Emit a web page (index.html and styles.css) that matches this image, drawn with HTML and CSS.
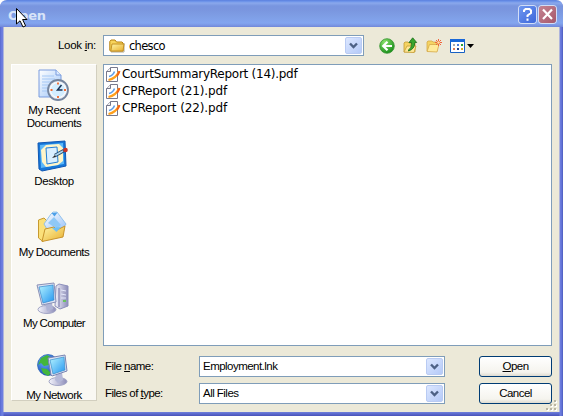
FILE: index.html
```html
<!DOCTYPE html>
<html lang="en">
<head>
<meta charset="utf-8">
<title>Open</title>
<link rel="stylesheet" href="styles.css">
</head>
<body>
<svg width="0" height="0" class="defs" aria-hidden="true">
  <defs>
    <linearGradient id="gold" x1="0" y1="0" x2="1" y2="1"><stop offset="0" stop-color="#fff6a8"/><stop offset="1" stop-color="#e8ae2c"/></linearGradient>
    <linearGradient id="screen" x1="0" y1="0" x2="1" y2="1"><stop offset="0" stop-color="#b5f4ff"/><stop offset="1" stop-color="#2495f0"/></linearGradient>
    <linearGradient id="metal" x1="0" y1="0" x2="1" y2="0"><stop offset="0" stop-color="#f4f4fc"/><stop offset="1" stop-color="#8c8cb8"/></linearGradient>
    <linearGradient id="sheet" x1="0" y1="0" x2="1" y2="1"><stop offset="0" stop-color="#fff"/><stop offset="1" stop-color="#9cc4f8"/></linearGradient>
    <radialGradient id="green" cx=".35" cy=".25" r=".8"><stop offset="0" stop-color="#8be36c"/><stop offset="1" stop-color="#168c18"/></radialGradient>
    <radialGradient id="ocean" cx=".35" cy=".3" r=".8"><stop offset="0" stop-color="#6ab8ff"/><stop offset="1" stop-color="#1238b0"/></radialGradient>
    <symbol id="chev" viewBox="0 0 9 8"><path d="M1 1.5 4.5 5 8 1.5" fill="none" stroke="#4d6185" stroke-width="2.4"/></symbol>
    <symbol id="pdf" viewBox="0 0 15 17">
      <path d="M4.500 1.500h7v14H.5v-10z" fill="#fff" stroke="#77798c"/><path d="M.5 5.500h4v-4" fill="#eee" stroke="#77798c"/>
      <path d="M3 10.500q4-1 5.500-5" fill="none" stroke="#5b9ce8" stroke-width="1.600"/>
      <path d="M2.500 14Q10 12.500 13 5.500" fill="none" stroke="#ffa01c" stroke-width="2.200"/><path d="M11 10q1.500-2 2.500-5" fill="none" stroke="#f46216" stroke-width="2"/>
    </symbol>
  </defs>
</svg>
<div class="window">
  <header class="titlebar">
    <span class="title">Open</span>
    <span class="cap help"><svg width="17" height="17" viewBox="0 0 17 17"><path d="M5 6V4.500L6.500 3h4L12 4.500V7L8.500 9.500V11M8.500 12.500v2.200" fill="none" stroke="#fff" stroke-width="2"/></svg></span>
    <span class="cap close"><svg width="17" height="17" viewBox="0 0 17 17"><path d="m4 3.500 9 9.500M13 3.500 4 13" fill="none" stroke="#fff" stroke-width="2.200"/></svg></span>
  </header>
  <svg class="cursor" width="13" height="22" viewBox="0 0 13 22"><path d="M1.500 1.500v15.500l3.500-3.200 3 6.200 2.600-1.200-3-6.300H12z" fill="#fff" stroke="#000"/></svg>
  <main class="client">
    <div class="lookrow">
      <label class="ui looklabel">Look <u>i</u>n:</label>
      <div class="combo lookcombo">
        <svg width="16" height="14" viewBox="0 0 16 14"><path d="M2 13h13V4" stroke="#ada995" fill="none"/><path d="M.8 11.500v-9L2 1h4l1.500 2H13l1 1v8H1.500z" fill="#f7d45c" stroke="#b88212"/><path d="M3 5h12l-1 7H1.800z" fill="url(#gold)" stroke="#c59225"/></svg>
        <span class="look-value">chesco</span>
        <span class="drop"><svg width="9" height="8"><use href="#chev"/></svg></span>
      </div>
      <div class="tools">
        <svg width="16" height="16" viewBox="0 0 16 16"><circle cx="8" cy="8" r="7.300" fill="url(#green)" stroke="#379432" stroke-width=".8"/><path d="M8.500 3.800 4.200 8l4.300 4.200M4.500 8H13" fill="none" stroke="#fff" stroke-width="2.200"/></svg>
        <svg width="15" height="17" viewBox="0 0 15 17"><path d="M1 15V6l1-1h3l1 1h6v9z" fill="#f5d463" stroke="#c29a35" stroke-width=".8"/><path d="m1 15 3-6h9l-2 6.500z" fill="#ffe898" stroke="#c79d36" stroke-width=".8"/><path d="M5.500 13Q9 11 8.500 5.500H6L9.700.8l4 4.700h-2Q12 12 5.500 14z" fill="#38a52e" stroke="#176d16" stroke-width=".8"/></svg>
        <svg width="16" height="14" viewBox="0 0 16 14"><path d="M1 12V3l1-1h4l1 1h4v9z" fill="#f5d463" stroke="#d5a94a" stroke-width=".8"/><path d="m1 12.500 2.500-7H13l-2 7.500z" fill="#ffeb9a" stroke="#d5a94a" stroke-width=".8"/><path d="M12.500 0v7M9 3.500h7M10 1l5 5M15 1l-5 5" stroke="#f0643c"/><circle cx="12.500" cy="3.500" r="1.200" fill="#ffe6a0"/></svg>
        <svg width="25" height="14" viewBox="0 0 25 14"><path d="M.5.500h14v13H.5z" fill="#fff" stroke="#1761c3"/><path d="M0 0h15v3H0z" fill="#1968d8"/><path d="M3 5h2v2H3z" fill="#aaa"/><path d="M7 5h2v2H7z" fill="#4a7dde"/><path d="M11 5h2v2h-2z" fill="#2c9f38"/><path d="M3 9h2v2H3z" fill="#e17b54"/><path d="M7 9h2v2H7z" fill="#21418c"/><path d="M11 9h2v2h-2z" fill="#dda922"/><path d="M17 5h7l-3.500 4z" fill="#000"/></svg>
      </div>
    </div>
    <div class="middle">
      <nav class="places">
        <div class="place recent">
          <svg width="32" height="32" viewBox="0 0 32 32"><path d="M2 1h17l5 5v22H2z" fill="url(#sheet)" stroke="#7b9cde"/><path d="M19 1v5h5" fill="#dcebff" stroke="#7b9cde"/><path d="M5 7h12M5 10h13M5 13h10M5 16h8M5 19h7M5 22h7" stroke="#a5c8f5"/><circle cx="21" cy="21" r="10" fill="#e8edf4" stroke="#75859e" stroke-width="1.800"/><circle cx="21" cy="21" r="7.600" fill="#d4eeff" stroke="#fff"/><path d="M21 13.500v2M21 27v2M13.500 21h2M27 21h2" stroke="#f26b31" stroke-width="1.800"/><path d="m24.500 16-4 5h5" fill="none" stroke="#1b3457" stroke-width="1.500"/></svg>
          <span class="ui p1">My Recent</span><span class="ui p2">Documents</span>
        </div>
        <div class="place desktop">
          <svg width="32" height="32" viewBox="0 0 32 32"><path d="m1 3 27-2 1 25-24 5-3-2z" fill="#1677d8" stroke="#1058b4"/><path d="m3 5 23-2 1 21-23 4z" fill="#5bb8fa"/><path d="m4 10 5-5 13-1 4 4v13l-5 4-12 2-4-5z" fill="#fff5c9"/><path d="m9 8 11-1 1 15-11 2z" fill="#d9efff" stroke="#237fd5"/><path d="m18 15.500 9-5" stroke="#23466b" stroke-width="3.600"/><path d="m18 15.500 8-4.500" stroke="#a9d4ee" stroke-width="2"/><path d="m15 18 3-3 1 2z" fill="#222"/><circle cx="28.500" cy="10" r="2.300" fill="#c63328"/></svg>
          <span class="ui p3">Desktop</span>
        </div>
        <div class="place docs">
          <svg width="32" height="32" viewBox="0 0 32 32"><path d="M6 30.500 1.500 27V9L7 7l3 3 2 12z" fill="#fbe07a" stroke="#c79a2e"/><path d="m7 13 7-10 2-2h4l9 12-3 5H10z" fill="url(#sheet)" stroke="#7fb8ea" stroke-width=".8"/><path d="m14.500 2 3 3.500L20.500 1.500z" fill="#4ca0e8"/><path d="m17 6 7 8-4 4-9-6z" fill="#8fc8f6"/><path d="m5 30.500 3-12.500 9-2 3 3 8-4-2 11z" fill="url(#gold)" stroke="#c8932b"/><path d="m15 17 9-1-4.500 5z" fill="#6fbff4"/></svg>
          <span class="ui p4">My Documents</span>
        </div>
        <div class="place computer">
          <svg width="34" height="32" viewBox="0 0 34 32"><path d="m20 4 3-2 9 2v20l-8 3-5-3z" fill="url(#metal)" stroke="#8d90bb"/><path d="M23 6v19" stroke="#6c6fa3"/><path d="m25 8 5 1M25 12l5 1M25 16h5" stroke="#e5e8fa"/><path d="M27 19h3" stroke="#68c35c" stroke-width="2"/><ellipse cx="11" cy="27.500" rx="9" ry="4" fill="url(#metal)" stroke="#a3a6c6"/><path d="m9 20 7 1 1 6-6 2z" fill="#afb4d5"/><path d="m1 3 17-2 2 19-14 3z" fill="#dde3f3" stroke="#8a91b7"/><path d="m3 5 14-2 1 15-11 3z" fill="url(#screen)" stroke="#3387cc" stroke-width=".7"/></svg>
          <span class="ui p5">My Computer</span>
        </div>
        <div class="place network">
          <svg width="34" height="33" viewBox="0 0 34 33"><circle cx="12" cy="12" r="10.500" fill="url(#ocean)" stroke="#2260b4" stroke-width=".7"/><path d="m5 5 6-3 5 3-4 3 1 4-5 1-3-3-3 2zM5 15l6 1 4 4-3 3-5-3z" fill="#43b63c"/><ellipse cx="22" cy="28.500" rx="9" ry="4" fill="url(#metal)" stroke="#a3a6c6"/><path d="m20 20 6-1 1 8-5 3-3-3z" fill="#b4b8d8"/><path d="m12 5 17-3 2 16-15 5-1-1z" fill="#dde3f3" stroke="#7a84b1"/><path d="m14 7 14-3 1 13-12 4z" fill="url(#screen)" stroke="#388fca" stroke-width=".7"/></svg>
          <span class="ui p6">My Network</span>
        </div>
      </nav>
      <div class="right">
        <ul class="files">
          <li><svg width="15" height="17"><use href="#pdf"/></svg><span class="f1">CourtSummaryReport (14).pdf</span></li>
          <li><svg width="15" height="17"><use href="#pdf"/></svg><span class="f2">CPReport (21).pdf</span></li>
          <li><svg width="15" height="17"><use href="#pdf"/></svg><span class="f2">CPReport (22).pdf</span></li>
        </ul>
        <div class="form">
          <label class="ui">File <u>n</u>ame:</label>
          <div class="combo"><span class="ui">Employment.lnk</span><span class="drop"><svg width="9" height="8"><use href="#chev"/></svg></span></div>
          <button class="ui"><span><u>O</u>pen</span></button>
          <label class="ui">Files of <u>t</u>ype:</label>
          <div class="combo"><span class="ui">All Files</span><span class="drop"><svg width="9" height="8"><use href="#chev"/></svg></span></div>
          <button class="ui"><span>Cancel</span></button>
        </div>
      </div>
    </div>
  </main>
  <svg class="grip" width="11" height="11" viewBox="0 0 11 11"><path d="M9 1h2v2H9zM5 5h2v2H5zM9 5h2v2H9zM1 9h2v2H1zM5 9h2v2H5zM9 9h2v2H9z" fill="#fff"/><path d="M8 0h2v2H8zM4 4h2v2H4zM8 4h2v2H8zM0 8h2v2H0zM4 8h2v2H4zM8 8h2v2H8z" fill="#b9b5a3"/></svg>
</div>
</body>
</html>
```
FILE: styles.css
```css
* { box-sizing: border-box; }
body { margin: 0; background: #fff; overflow: hidden; }
.defs { position: absolute; }
svg { display: block; flex: none; }
.window {
  position: relative;
  width: 563px;
  height: 416px;
  padding: 0 4px 4px;
  border-radius: 7px 7px 0 0;
  background: linear-gradient(90deg, #5465cc 0, #6678dc 1px, #7080e0 3px, transparent 4px, transparent 559px, #7080e0 560px, #6070d4 562px, #4858b8 563px), linear-gradient(0deg, #4a52b8 0, #5a68cc 2px, #7080dc 4px, #ece9d8 4px);
}
.titlebar {
  display: flex;
  align-items: flex-start;
  gap: 3px;
  height: 27px;
  margin: 0 -4px;
  padding: 6px 6px 0 8px;
  border-radius: 7px 7px 0 0;
  background: linear-gradient(#5c7fdc 0, #668ee8 1px, #8aa8ec 3px, #7895df 6px, #7a96df 10px, #7f9fe6 17px, #83a5ef 23px, #7c98e5 25px, #7187d8 27px);
}
.title {
  flex: 1;
  font: bold 13px/20px "DejaVu Sans", sans-serif;
  color: #d8e4f8;
  letter-spacing: -.1px;
}
.cap { width: 17px; height: 17px; border-radius: 3px; box-shadow: 0 0 0 1px #d2def7; position: relative; left: -1px; }
.help { background: linear-gradient(135deg, #7098f0, #3c66da); }
.close { background: linear-gradient(135deg, #c58391, #a6586b); }
.cursor { position: absolute; left: 15px; top: 7px; }
.client { height: 385px; padding: 8px 7px 0; background: #ece9d8; }
.ui { font: 11.5px/13px "Liberation Sans", Arial, sans-serif; letter-spacing: -.53px; color: #000; white-space: nowrap; }
u { text-decoration: underline; text-underline-offset: 1px; text-decoration-thickness: 1px; }
.lookrow { display: flex; height: 21px; align-items: center; }
.looklabel { width: 92px; padding-left: 47px; letter-spacing: -.3px; }
.combo { display: flex; align-items: center; height: 21px; background: #fff; border: 1px solid #7f9db9; padding: 0 1px 0 3px; }
.lookcombo { width: 261px; gap: 4px; padding-left: 5px; }
.look-value { font: 11.5px/16px "DejaVu Sans", sans-serif; letter-spacing: -.7px; }
.drop {
  display: flex;
  align-items: center;
  justify-content: center;
  width: 17px;
  height: 17px;
  margin-left: auto;
  border: 1px solid #b9cbf3;
  border-radius: 2px;
  background: linear-gradient(135deg, #dce7ff, #b5caf8);
}
.tools { display: flex; align-items: center; margin-left: 15px; gap: 8px; }
.middle { display: flex; gap: 6px; margin-top: 8px; }
.places { width: 86px; height: 337px; background: #f9f8f3; border: 1px solid #fff; border-right-color: #d2cfbf; border-bottom-color: #d2cfbf; padding-top: 4px; }
.place { display: flex; flex-direction: column; align-items: center; height: 71px; }
.place svg { margin: 0 0 3px -3px; }
.p1, .p2, .p3 { letter-spacing: -.38px; }
.p5 { letter-spacing: -.63px; }
.right { width: 449px; }
.files { height: 282px; margin: 0; padding: 1px 2px; list-style: none; border: 1px solid #7f9db9; background: #fff; }
.files li { display: flex; gap: 1px; height: 17px; font: 12px/16px "DejaVu Sans", sans-serif; white-space: nowrap; }
.f1 { letter-spacing: -.26px; }
.f2 { letter-spacing: -.12px; }
.form { display: grid; grid-template-columns: 96px 246px 73px; column-gap: 0; row-gap: 6px; padding-top: 10px; align-items: center; }
.form label { padding-left: 2px; }
.form button { width: 73px; height: 21px; margin: 0 0 0 34px; padding: 0; border: 1px solid #003c74; border-radius: 3px; background: linear-gradient(#fff, #f5f4ee 80%, #dedbd0); }
.grip { position: absolute; left: 546px; top: 400px; }
```
